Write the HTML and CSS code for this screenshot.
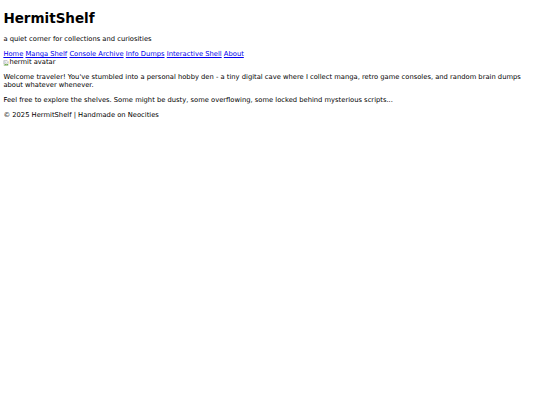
FILE: index.html
```html
<!DOCTYPE html>
<html lang="en">
<head>
<meta charset="utf-8">
<title>HermitShelf</title>
<link rel="stylesheet" href="styles.css">
</head>
<body>
<header class="site-header">
  <h1 class="site-title">HermitShelf</h1>
  <p class="tagline">a quiet corner for collections and curiosities</p>
  <nav class="site-nav">
    <a href="#">Home</a>
    <a href="#">Manga Shelf</a>
    <a href="#">Console Archive</a>
    <a href="#">Info Dumps</a>
    <a href="#">Interactive Shell</a>
    <a href="#">About</a>
  </nav>
</header>
<main class="content">
  <div class="avatar" role="img" aria-label="hermit avatar"><svg class="broken-icon" viewBox="0 0 16 16" aria-hidden="true"><path d="M2 1.5h9l3 3v4.5l-2-1.5-2.5 2-2-2L2 11z" fill="#f2f2f2" stroke="#8a8a8a" stroke-width="1"/><path d="M2 13l5.5-3 2 2 2.5-2 2 1.5v3H2z" fill="#6fa84f"/><circle cx="5" cy="5" r="1.3" fill="#4d8ad6"/></svg><span class="alt-text">hermit avatar</span></div>
  <p>Welcome traveler! You've stumbled into a personal hobby den - a tiny digital cave where I collect manga, retro game consoles, and random brain dumps about whatever whenever.</p>
  <p>Feel free to explore the shelves. Some might be dusty, some overflowing, some locked behind mysterious scripts...</p>
</main>
<footer class="site-footer">
  <p>&copy; 2025 HermitShelf | Handmade on Neocities</p>
</footer>
</body>
</html>
```

FILE: styles.css
```css
body {
  margin: 3.375px;
  font-family: "DejaVu Sans", Verdana, sans-serif;
  font-size: 6.75px;
  line-height: 8px;
  color: #000;
  background: #fff;
}
.site-title {
  font-size: 13.5px;
  line-height: 16px;
  margin: 7px 0 9px;
}
.tagline {
  margin: 0 0 6.75px;
}
.site-nav a {
  color: #0000ee;
}
.avatar {
  display: flex;
  align-items: center;
  line-height: 7px;
  margin: 1px 0 6.75px;
}
.broken-icon {
  width: 6px;
  height: 6px;
  flex: none;
}
.content p {
  margin: 6.75px 0;
}
.site-footer p {
  margin: 7.5px 0 6.75px;
}
```
